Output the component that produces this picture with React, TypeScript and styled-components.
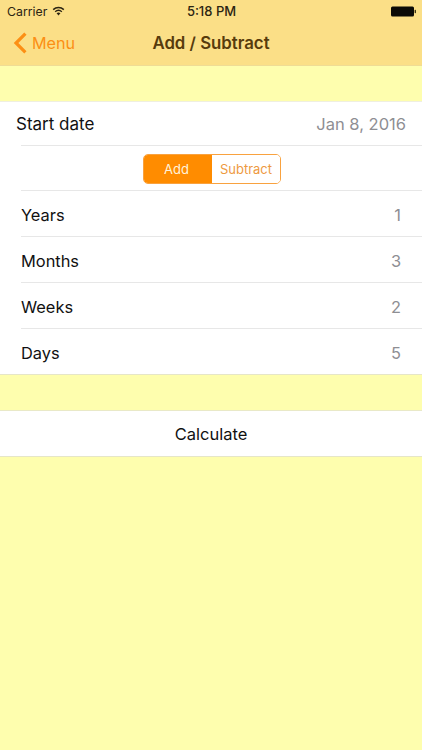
import React from "react";
import styled, { createGlobalStyle } from "styled-components";

const GlobalStyle = createGlobalStyle`
  html, body {
    margin: 0;
    padding: 0;
    background: #fefeae;
    font-family: Inter, "Liberation Sans", sans-serif;
  }
  * {
    box-sizing: border-box;
  }
`;

const Page = styled.div`
  width: 422px;
  height: 750px;
  overflow: hidden;
  background: #fefeae;
`;

const Header = styled.header`
  height: 66px;
  background: #fbdf87;
  border-bottom: 1px solid #efdc95;
`;

const StatusBar = styled.div`
  height: 21px;
  padding: 1px 6px 0 7px;
  display: grid;
  grid-template-columns: 1fr auto 1fr;
  align-items: center;
  font-size: 13px;
  font-weight: 500;
  color: #2b2412;
`;

const StatusLeft = styled.div`
  display: flex;
  align-items: center;
  gap: 5px;
  font-size: 12.3px;
  font-weight: 400;
`;

const StatusRight = styled.div`
  display: flex;
  justify-content: flex-end;
`;

const NavBar = styled.div`
  height: 44px;
  display: grid;
  grid-template-columns: 1fr auto 1fr;
  align-items: center;
  padding: 0 13px 1px;
`;

const BackLink = styled.div`
  display: flex;
  align-items: center;
  gap: 5px;
  color: #fc8f14;
  font-size: 16.2px;
`;

const NavTitle = styled.div`
  font-size: 16.8px;
  font-weight: 600;
  color: #573b0c;
`;

const Spacer = styled.div<{ $height: number }>`
  height: ${(p) => p.$height}px;
`;

const Section = styled.section`
  background: #fff;
  border-top: 1px solid #efefe0;
  border-bottom: 1px solid #e6e6c8;
`;

const StartRow = styled.div`
  height: 43px;
  padding: 0 16px;
  display: flex;
  align-items: center;
  justify-content: space-between;
  font-size: 17px;
  color: #111;
`;

const Row = styled.div<{ $last?: boolean }>`
  height: ${(p) => (p.$last ? 45 : 46)}px;
  margin-left: 21px;
  padding: 2px 21px 0 0;
  display: flex;
  align-items: center;
  justify-content: space-between;
  font-size: 16.4px;
  color: #111;
  ${(p) => !p.$last && "border-bottom: 1px solid #e7e7e7;"}
`;

const Value = styled.span`
  color: #8e8e93;
`;

const DateValue = styled(Value)`
  font-size: 16.5px;
`;

const ToggleRow = styled.div`
  height: 46px;
  margin-left: 21px;
  border-top: 1px solid #e7e7e7;
  border-bottom: 1px solid #e7e7e7;
  display: flex;
  align-items: center;
  padding: 1px 0 0 122px;
`;

const Toggle = styled.div`
  width: 138px;
  height: 30px;
  display: grid;
  grid-template-columns: 68px 1fr;
  border: 1.5px solid #f9a23f;
  border-radius: 5px;
  overflow: hidden;
  font-size: 13px;
`;

const ToggleOption = styled.div<{ $active?: boolean }>`
  display: flex;
  align-items: center;
  justify-content: center;
  padding-right: ${(p) => (p.$active ? 3 : 0)}px;
  background: ${(p) => (p.$active ? "#ff8c00" : "#fff")};
  color: ${(p) => (p.$active ? "#fff3dc" : "#ee9a3f")};
`;

const ActionButton = styled.div`
  height: 47px;
  background: #fff;
  border-top: 1px solid #e9e9c8;
  border-bottom: 1px solid #e6e6c8;
  display: flex;
  align-items: center;
  justify-content: center;
  font-size: 16.5px;
  color: #111;
`;

const Wifi = () => (
  <svg width="13" height="10" viewBox="0 0 14 11" fill="#2b2412">
    <path d="M7 10.5 4.9 8.1a3.2 3.2 0 0 1 4.2 0L7 10.5Z" />
    <path d="M3.8 6.9 2.8 5.8a6.4 6.4 0 0 1 8.4 0l-1 1.1a4.9 4.9 0 0 0-6.4 0Z" />
    <path d="M1.7 4.6.6 3.4a9.6 9.6 0 0 1 12.8 0l-1.1 1.2a8 8 0 0 0-10.6 0Z" />
  </svg>
);

const Battery = () => (
  <svg width="25" height="11" viewBox="0 0 25 11">
    <rect x="0" y="0.5" width="23" height="10" rx="1.5" fill="#0b0a06" />
    <rect x="23.6" y="3.8" width="1.4" height="3.4" rx="0.6" fill="#3a3212" />
  </svg>
);

const Chevron = () => (
  <svg width="14" height="22" viewBox="0 0 14 22" fill="none">
    <path d="M12.4 1.6 3 11l9.4 9.4" stroke="#fc8f14" strokeWidth="3.2" />
  </svg>
);

const periods = [
  { label: "Years", value: 1 },
  { label: "Months", value: 3 },
  { label: "Weeks", value: 2 },
  { label: "Days", value: 5 },
];

export default function App() {
  return (
    <Page>
      <GlobalStyle />
      <Header>
        <StatusBar>
          <StatusLeft>
            Carrier <Wifi />
          </StatusLeft>
          <span>5:18 PM</span>
          <StatusRight>
            <Battery />
          </StatusRight>
        </StatusBar>
        <NavBar>
          <BackLink>
            <Chevron /> Menu
          </BackLink>
          <NavTitle>Add / Subtract</NavTitle>
        </NavBar>
      </Header>
      <Spacer $height={35} />
      <Section>
        <StartRow>
          Start date <DateValue>Jan 8, 2016</DateValue>
        </StartRow>
        <ToggleRow>
          <Toggle>
            <ToggleOption $active>Add</ToggleOption>
            <ToggleOption>Subtract</ToggleOption>
          </Toggle>
        </ToggleRow>
        {periods.map((p, i) => (
          <Row key={p.label} $last={i === periods.length - 1}>
            {p.label} <Value>{p.value}</Value>
          </Row>
        ))}
      </Section>
      <Spacer $height={35} />
      <ActionButton>Calculate</ActionButton>
    </Page>
  );
}
